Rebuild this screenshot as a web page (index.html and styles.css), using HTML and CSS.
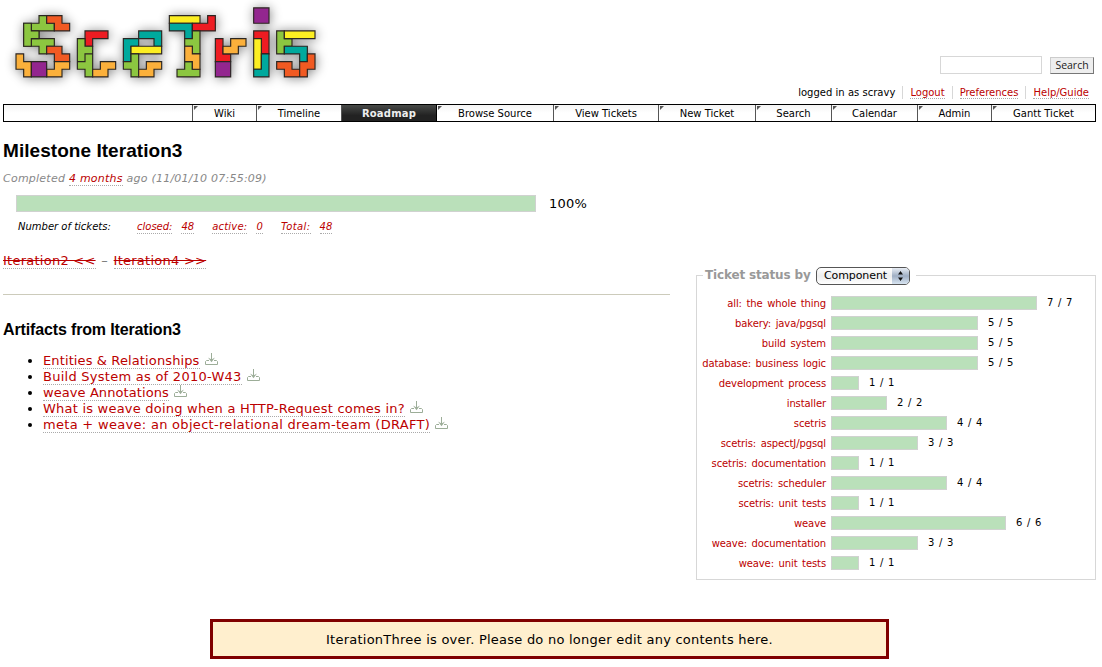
FILE: index.html
```
<!DOCTYPE html>
<html lang="en">
<head>
<meta charset="utf-8">
<title>Milestone Iteration3</title>
<link rel="stylesheet" href="styles.css">
</head>
<body>
<svg class="symbols" width="0" height="0"><symbol id="download" viewBox="0 0 13 12"><path d="M6.5 0v7M4 7.5H1.5L.5 8.5v3h12v-3l-1-1H9" fill="none" stroke="#9cad98"/><path d="M3 4.5l3.5 4.8L10 4.5 6.5 6.5z" fill="#9cad98"/></symbol></svg>
<header class="header">
  <svg class="logo" viewBox="-2.087 -2.035 45.65 13.565" role="img" aria-label="Scetris">
    <defs><filter id="shade" x="-10%" y="-30%" width="120%" height="160%"><feDropShadow dx=".1" dy=".1" stdDeviation=".68" flood-color="#000" flood-opacity=".48"/></filter></defs>
    <g class="blocks" filter="url(#shade)">
      <path class="green" d="M3 0h1v1h1v1h-3v-1h1zM1 1h1v1h1v1h-1v1h-1zM2 3h3v1h-1v1h-1v-1h-1z"/>
      <path class="green" d="M1 1h1v1h1v1h-1v1h-1z"/>
      <path class="orange" d="M4 0h2v1h1v1h-2v-1h-1zM4 4h2v1h1v1h-2v-1h-1z"/>
      <path class="amber" d="M0 5h1v1h1v2h-1v-1h-1zM5 6h2v1h-1v1h-2v-1h1z"/>
      <path class="purple" d="M2 6h2v2h-2z"/>
      <path class="red" d="M9 2h3v1h-2v1h-1z"/>
      <path class="green" d="M8 3h1v1h1v1h-1v1h-1zM8 6h1v-1h1v3h-1v-1h-1z"/>
      <path class="amber" d="M11 6h2v1h-1v1h-2v-1h1z"/>
      <path class="teal" d="M14 3h2v1h-1v2h-1zM16 2h3v2h-1v-1h-2z"/>
      <path class="yellow" d="M15 4h4v1h-4z"/>
      <path class="green" d="M14 6h1v-1h1v3h-1v-1h-1z"/>
      <path class="amber" d="M17 6h2v1h-1v1h-2v-1h1z"/>
      <path class="yellow" d="M20 0h4v1h-4z"/>
      <path class="teal" d="M20 1h3v2h-1v-1h-2z"/>
      <path class="red" d="M23 1h2v-1h1v2h-3z"/>
      <path class="green" d="M23 2h1v3h-1v-1h-1v-1h1zM22 6h1v1h1v1h-3v-1h1z"/>
      <path class="amber" d="M22 4h1v1h1v2h-1v-1h-1z"/>
      <path class="red" d="M26 3h1v2h1v1h-2z"/>
      <path class="purple" d="M26 6h2v2h-2z"/>
      <path class="amber" d="M28 3h2v1h-1v1h-2v-1h1z"/>
      <path class="purple" d="M31 -1h2v2h-2z"/>
      <path class="red" d="M31 2h2v3h-1v-2h-1z"/>
      <path class="yellow" d="M31 3h1v4h-1z"/>
      <path class="teal" d="M32 5h1v3h-2v-1h1z"/>
      <path class="green" d="M34 2h1v1h1v1h-1v1h-1z"/>
      <path class="yellow" d="M35 2h4v1h-4z"/>
      <path class="teal" d="M35 4h3v2h-1v-1h-2z"/>
      <path class="orange" d="M34 6h2v1h1v1h-2v-1h-1zM38 5h1v2h-1v1h-1v-2h1z"/>
    </g>
  </svg>
  <div class="account">
    <form class="search"><input class="search-box" type="text" aria-label="Search"><button class="search-button" type="button">Search</button></form>
    <div class="meta"><span class="user">logged in as scravy</span><span class="cell"><a>Logout</a></span><span class="cell"><a>Preferences</a></span><span class="cell"><a>Help/Guide</a></span></div>
  </div>
</header>
<nav class="nav">
  <span class="tab wiki">Wiki</span><span class="tab timeline">Timeline</span><span class="tab roadmap">Roadmap</span><span class="tab browse">Browse Source</span><span class="tab tickets">View Tickets</span><span class="tab new-ticket">New Ticket</span><span class="tab find">Search</span><span class="tab calendar">Calendar</span><span class="tab admin">Admin</span><span class="tab gantt">Gantt Ticket</span>
</nav>
<main class="content">
  <section class="milestone">
    <h1 class="title">Milestone Iteration3</h1>
    <p class="date">Completed <a>4 months</a> ago (11/01/10 07:55:09)</p>
    <div class="progress"><div class="bar"></div><span class="percent">100%</span></div>
    <div class="counts"><span class="count-label">Number of tickets:</span><a class="closed">closed:</a><a class="closed-n">48</a><a class="active">active:</a><a class="active-n">0</a><a class="total">Total:</a><a>48</a></div>
    <p class="siblings"><a class="past">Iteration2 &lt;&lt;</a><span class="dash">–</span><a class="past">Iteration4 &gt;&gt;</a></p>
    <h2 class="subtitle">Artifacts from Iteration3</h2>
    <ul class="artifacts">
      <li class="entities"><a>Entities &amp; Relationships</a><svg class="download"><use href="#download"/></svg></li>
      <li class="build"><a>Build System as of 2010-W43</a><svg class="download"><use href="#download"/></svg></li>
      <li class="annotations"><a>weave Annotations</a><svg class="download"><use href="#download"/></svg></li>
      <li class="request"><a>What is weave doing when a HTTP-Request comes in?</a><svg class="download"><use href="#download"/></svg></li>
      <li class="draft"><a>meta + weave: an object-relational dream-team (DRAFT)</a><svg class="download"><use href="#download"/></svg></li>
    </ul>
  </section>
  <section class="status">
    <div class="legend"><span class="legend-text">Ticket status by</span><span class="select"><span class="select-value">Component</span><span class="arrows"><svg width="7" height="10" viewBox="0 0 7 10"><path d="M3.5 0L6 3.5H1zM3.5 10L6 6.5H1z" fill="#111"/></svg></span></span></div>
    <div class="row"><span class="name">all: the whole thing</span><i class="bar" style="width:206px"></i><span class="ratio">7 / 7</span></div>
    <div class="row"><span class="name">bakery: java/pgsql</span><i class="bar" style="width:147px"></i><span class="ratio">5 / 5</span></div>
    <div class="row"><span class="name">build system</span><i class="bar" style="width:147px"></i><span class="ratio">5 / 5</span></div>
    <div class="row"><span class="name">database: business logic</span><i class="bar" style="width:147px"></i><span class="ratio">5 / 5</span></div>
    <div class="row"><span class="name">development process</span><i class="bar" style="width:28px"></i><span class="ratio">1 / 1</span></div>
    <div class="row"><span class="name">installer</span><i class="bar" style="width:56px"></i><span class="ratio">2 / 2</span></div>
    <div class="row"><span class="name">scetris</span><i class="bar" style="width:116px"></i><span class="ratio">4 / 4</span></div>
    <div class="row"><span class="name">scetris: aspectJ/pgsql</span><i class="bar" style="width:87px"></i><span class="ratio">3 / 3</span></div>
    <div class="row"><span class="name">scetris: documentation</span><i class="bar" style="width:28px"></i><span class="ratio">1 / 1</span></div>
    <div class="row"><span class="name">scetris: scheduler</span><i class="bar" style="width:116px"></i><span class="ratio">4 / 4</span></div>
    <div class="row"><span class="name">scetris: unit tests</span><i class="bar" style="width:28px"></i><span class="ratio">1 / 1</span></div>
    <div class="row"><span class="name">weave</span><i class="bar" style="width:175px"></i><span class="ratio">6 / 6</span></div>
    <div class="row"><span class="name">weave: documentation</span><i class="bar" style="width:87px"></i><span class="ratio">3 / 3</span></div>
    <div class="row"><span class="name">weave: unit tests</span><i class="bar" style="width:28px"></i><span class="ratio">1 / 1</span></div>
  </section>
</main>
<div class="notice">IterationThree is over. Please do no longer edit any contents here.</div>
</body>
</html>
```
FILE: styles.css
```
* { box-sizing: border-box; }
body { margin: 0; padding: 0 6px 0 3px; width: 1102px; height: 667px; overflow: hidden; background: #fff; color: #000; font-family: Verdana, "DejaVu Sans", sans-serif; font-size: 13px; }
.symbols { display: block; }
a { color: #b00; border-bottom: 1px dotted #aaa; }
.header { display: flex; justify-content: space-between; height: 104px; margin-left: -3px; }
.logo { width: 350px; height: 104px; flex: none; }
.blocks { stroke: #2b2520; stroke-width: .15; }
.green { fill: #8cc63f; }
.orange { fill: #f15a24; }
.amber { fill: #fbb03b; }
.purple { fill: #93278f; }
.red { fill: #ed1c24; }
.teal { fill: #00a99d; }
.yellow { fill: #fcee21; }
.account { display: flex; flex-direction: column; align-items: flex-end; padding-top: 56px; }
.search { display: flex; gap: 8px; margin: 0 2px 0 0; }
.search-box { width: 102px; height: 18px; padding: 0; border: 1px solid #d7d7d7; background: #fff; }
.search-button { width: 44px; height: 17px; margin-top: 1px; padding: 0; border: 1px solid #ccc; border-right-color: #777; border-bottom-color: #777; background: #eee; color: #222; font: 10.5px/13px "Open Sans", sans-serif; }
.meta { display: flex; margin-top: 12px; font-size: 10px; line-height: 13px; }
.user { letter-spacing: .02px; margin-right: 7px; }
.cell { border-left: 1px solid #d7d7d7; padding: 0 7px; height: 13px; }
.cell a { display: block; height: 13px; }
.nav { display: flex; justify-content: flex-end; height: 18px; border: 1px solid #000; background: linear-gradient(#f4f4f4, #fff 50%); font-size: 10px; line-height: 17px; }
.tab { position: relative; border-left: 1px solid #555; text-align: center; white-space: nowrap; }
.tab::before { content: ""; position: absolute; left: 1px; top: 1px; border-top: 4px solid #555; border-right: 4px solid transparent; }
.wiki { width: 64px; }
.timeline { width: 85px; }
.roadmap { width: 96px; background: linear-gradient(#484a48, #222 65%); border-right: 1px solid #000; color: #eee; font-weight: bold; letter-spacing: .2px; }
.roadmap::before { display: none; }
.browse { width: 116px; border-left: 0; }
.tickets { width: 105px; }
.new-ticket { width: 97px; }
.find { width: 76px; }
.calendar { width: 86px; }
.admin { width: 74px; }
.gantt { width: 104px; }
.content { display: flex; gap: 26px; height: 497px; }
.milestone { width: 667px; }
.title { margin: 18px 0 0; font: bold 19px/22px "Liberation Sans", Arial, sans-serif; letter-spacing: .05px; }
.date { margin: 9px 0 0; color: #888; font-size: 11px; font-style: italic; line-height: 15px; letter-spacing: .24px; }
.progress { display: flex; align-items: center; margin: 8px 0 0 13px; height: 18px; }
.bar { display: block; background: #bae0ba; border: 1px solid #d0d2d0; }
.progress .bar { width: 520px; height: 17px; }
.percent { margin-left: 13px; letter-spacing: .2px; }
.counts { display: flex; margin: 9px 0 0 15px; font-size: 10px; font-style: italic; line-height: 12px; }
.count-label { width: 119px; }
.closed, .active, .total { margin-right: 9px; }
.closed-n, .active-n { margin-right: 18px; }
.active, .active-n { letter-spacing: .2px; }
.total { letter-spacing: .4px; }
.siblings { display: flex; margin: 19px 0 0; height: 42px; border-bottom: 1px solid #cccbbb; line-height: 15px; }
.siblings a { height: 16px; letter-spacing: .25px; }
.past { text-decoration: line-through; }
.dash { width: 18px; text-align: center; color: #777; }
.subtitle { margin: 25px 0 0; font: bold 16px/20px "Liberation Sans", Arial, sans-serif; letter-spacing: -.14px; }
.artifacts { margin: 13px 0 0; padding-left: 40px; line-height: 16px; }
.artifacts li { height: 16px; white-space: nowrap; }
.entities { letter-spacing: .12px; }
.build { letter-spacing: .26px; }
.annotations { letter-spacing: .08px; }
.request { letter-spacing: .22px; }
.draft { letter-spacing: .3px; }
.download { width: 13px; height: 12px; margin-left: 5px; vertical-align: 0; }
.status { width: 400px; height: 305px; margin-top: 153px; border: 1px solid #d7d7d7; }
.legend { display: flex; align-items: center; width: 213px; height: 20px; margin: -10px 0 7px 6px; padding: 0 2px; background: #fff; }
.legend-text { width: 111px; margin-top: -2px; color: #999; font-size: 12px; font-weight: bold; letter-spacing: -.16px; white-space: nowrap; }
.select { display: flex; width: 94px; height: 18px; border: 1px solid #555; border-radius: 5px; background: linear-gradient(#fff, #eee 50%, #fff); overflow: hidden; font-size: 11px; line-height: 16px; }
.select-value { width: 75px; padding-left: 7px; letter-spacing: -.1px; }
.arrows { display: flex; align-items: center; justify-content: center; flex: 1; background: linear-gradient(#e8edf4, #9faec3 50%, #d8e5f2); }
.row { display: flex; align-items: center; height: 20px; font-size: 10px; }
.name { width: 129px; margin-right: 5px; text-align: right; color: #b00; white-space: nowrap; letter-spacing: -.1px; word-spacing: 1.5px; }
.row .bar { height: 14px; margin-right: 10px; }
.ratio { margin-top: -2px; word-spacing: 1.5px; }
.notice { width: 679px; height: 40px; margin: 0 0 0 207px; border: 3px solid #800000; background: #ffefce; line-height: 35px; text-align: center; letter-spacing: .24px; }
```
